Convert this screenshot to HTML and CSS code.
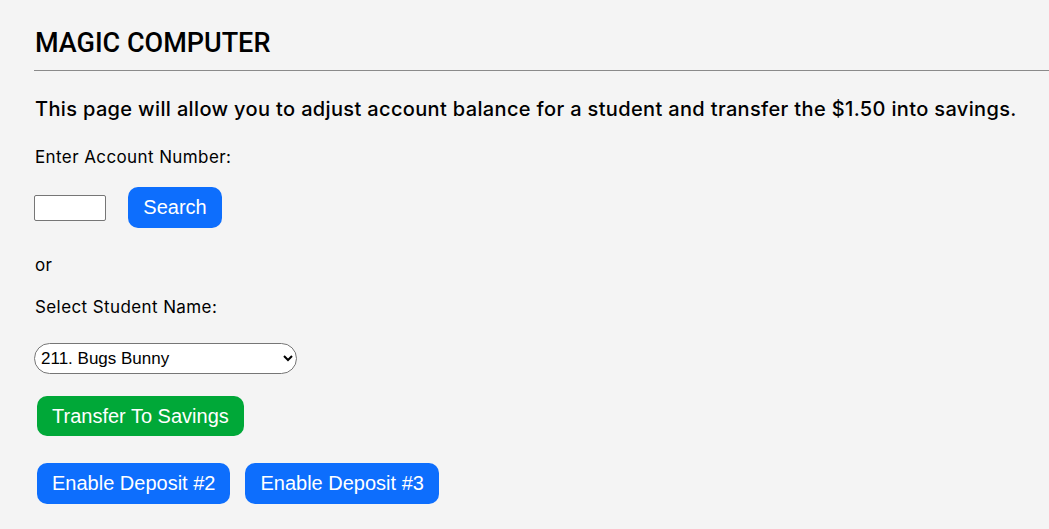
FILE: index.html
```html
<!DOCTYPE html>
<html>
<head>
<meta charset="utf-8">
<link rel="stylesheet" href="styles.css">
</head>
<body>
<div class="page">
  <h1 class="title">MAGIC COMPUTER</h1>
  <hr class="rule">
  <p class="intro">This page will allow you to adjust account balance for a student and transfer the $1.50 into savings.</p>
  <p class="label">Enter Account Number:</p>
  <div class="search-row">
    <input class="acct" type="text">
    <button class="btn btn-blue search">Search</button>
  </div>
  <p class="label or">or</p>
  <p class="label select-label">Select Student Name:</p>
  <select class="student"><option>211. Bugs Bunny</option></select>
  <div class="btn-row">
    <button class="btn btn-green">Transfer To Savings</button>
  </div>
  <div class="btn-row">
    <button class="btn btn-blue">Enable Deposit #2</button>
    <button class="btn btn-blue">Enable Deposit #3</button>
  </div>
</div>
</body>
</html>
```
FILE: styles.css
```css
html, body {
  margin: 0;
  padding: 0;
  background: #f4f4f4;
}
.page {
  padding: 24px 0 0 34px;
  font-family: Inter, "Open Sans", sans-serif;
  color: #000;
}
.title {
  margin: 0 0 0 1px;
  font-family: Roboto, "Liberation Sans", sans-serif;
  font-size: 27px;
  font-weight: 500;
  line-height: 38px;
}
.rule {
  margin: 8px 0 0 0;
  border: 0;
  border-top: 1px solid #8a8a8a;
}
.intro {
  margin: 24px 0 0 1px;
  font-size: 20px;
  font-weight: 500;
  line-height: 28px;
  letter-spacing: 0.35px;
}
.label {
  margin: 23px 0 0 1px;
  font-size: 17px;
  line-height: 22px;
  letter-spacing: 0.4px;
}
.search-row {
  display: flex;
  align-items: center;
  gap: 22px;
  margin-top: 19px;
}
.acct {
  width: 72px;
  height: 26px;
  box-sizing: border-box;
  border: 1px solid #767676;
  border-radius: 2px;
  background: #fff;
  margin: 0;
}
.btn {
  font-family: "Liberation Sans", Arial, sans-serif;
  font-size: 20px;
  color: #fff;
  border: 0;
  border-radius: 10px;
  height: 41px;
  padding: 0 15px;
  margin: 0;
}
.btn-blue { background: #0d6efd; }
.btn-green { background: #00a838; height: 40px; }
.search { width: 94px; }
.or { margin-top: 26px; }
.select-label { margin-top: 20px; }
.student {
  display: block;
  margin-top: 25px;
  width: 263px;
  height: 31px;
  border: 1px solid #767676;
  border-radius: 16px;
  background: #fff;
  font-family: "Liberation Sans", Arial, sans-serif;
  font-size: 17px;
  padding: 0 4px 0 2px;
}
.btn-row {
  display: flex;
  gap: 15px;
  margin: 22px 0 0 3px;
}
.btn-row + .btn-row { margin-top: 27px; }
```
